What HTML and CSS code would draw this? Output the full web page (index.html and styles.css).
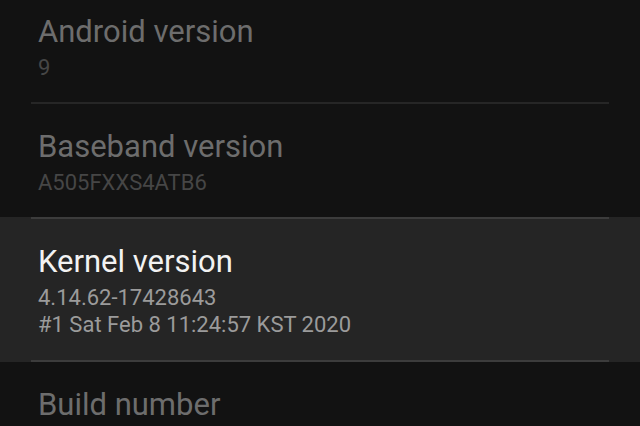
FILE: index.html
```html
<!DOCTYPE html>
<html>
<head>
<meta charset="utf-8">
<link rel="stylesheet" href="styles.css">
</head>
<body>
<div class="list">
  <div class="row">
    <div class="title">Android version</div>
    <div class="sub">9</div>
  </div>
  <div class="divider"></div>
  <div class="row">
    <div class="title">Baseband version</div>
    <div class="sub">A505FXXS4ATB6</div>
  </div>
  <div class="section-active">
    <div class="divider divider-bright"></div>
    <div class="row row-active">
      <div class="title">Kernel version</div>
      <div class="sub">4.14.62-17428643<br>#1 Sat Feb 8 11:24:57 KST 2020</div>
    </div>
    <div class="divider divider-bright"></div>
  </div>
  <div class="row">
    <div class="title">Build number</div>
  </div>
</div>
</body>
</html>
```
FILE: styles.css
```css
html, body {
  margin: 0;
  padding: 0;
  background: #121212;
  width: 640px;
  height: 426px;
  overflow: hidden;
  font-family: Roboto, "Noto Sans", sans-serif;
}
.list {
  margin-top: -11px;
}
.row {
  padding: 24px 38px 21px;
}
.row-active {
  padding-bottom: 22px;
}
.title {
  font-size: 31px;
  line-height: 38px;
  color: #6d6d6d;
}
.sub {
  margin-top: 3px;
  font-size: 22px;
  line-height: 27px;
  color: #464646;
}
.divider {
  height: 2px;
  margin: 0 31px;
  background: #262626;
}
.section-active {
  background: #252525;
}
.divider-bright {
  background: #3c3c3c;
}
.row-active .title {
  color: #f2f2f2;
}
.row-active .sub {
  color: #9b9b9b;
}
```
